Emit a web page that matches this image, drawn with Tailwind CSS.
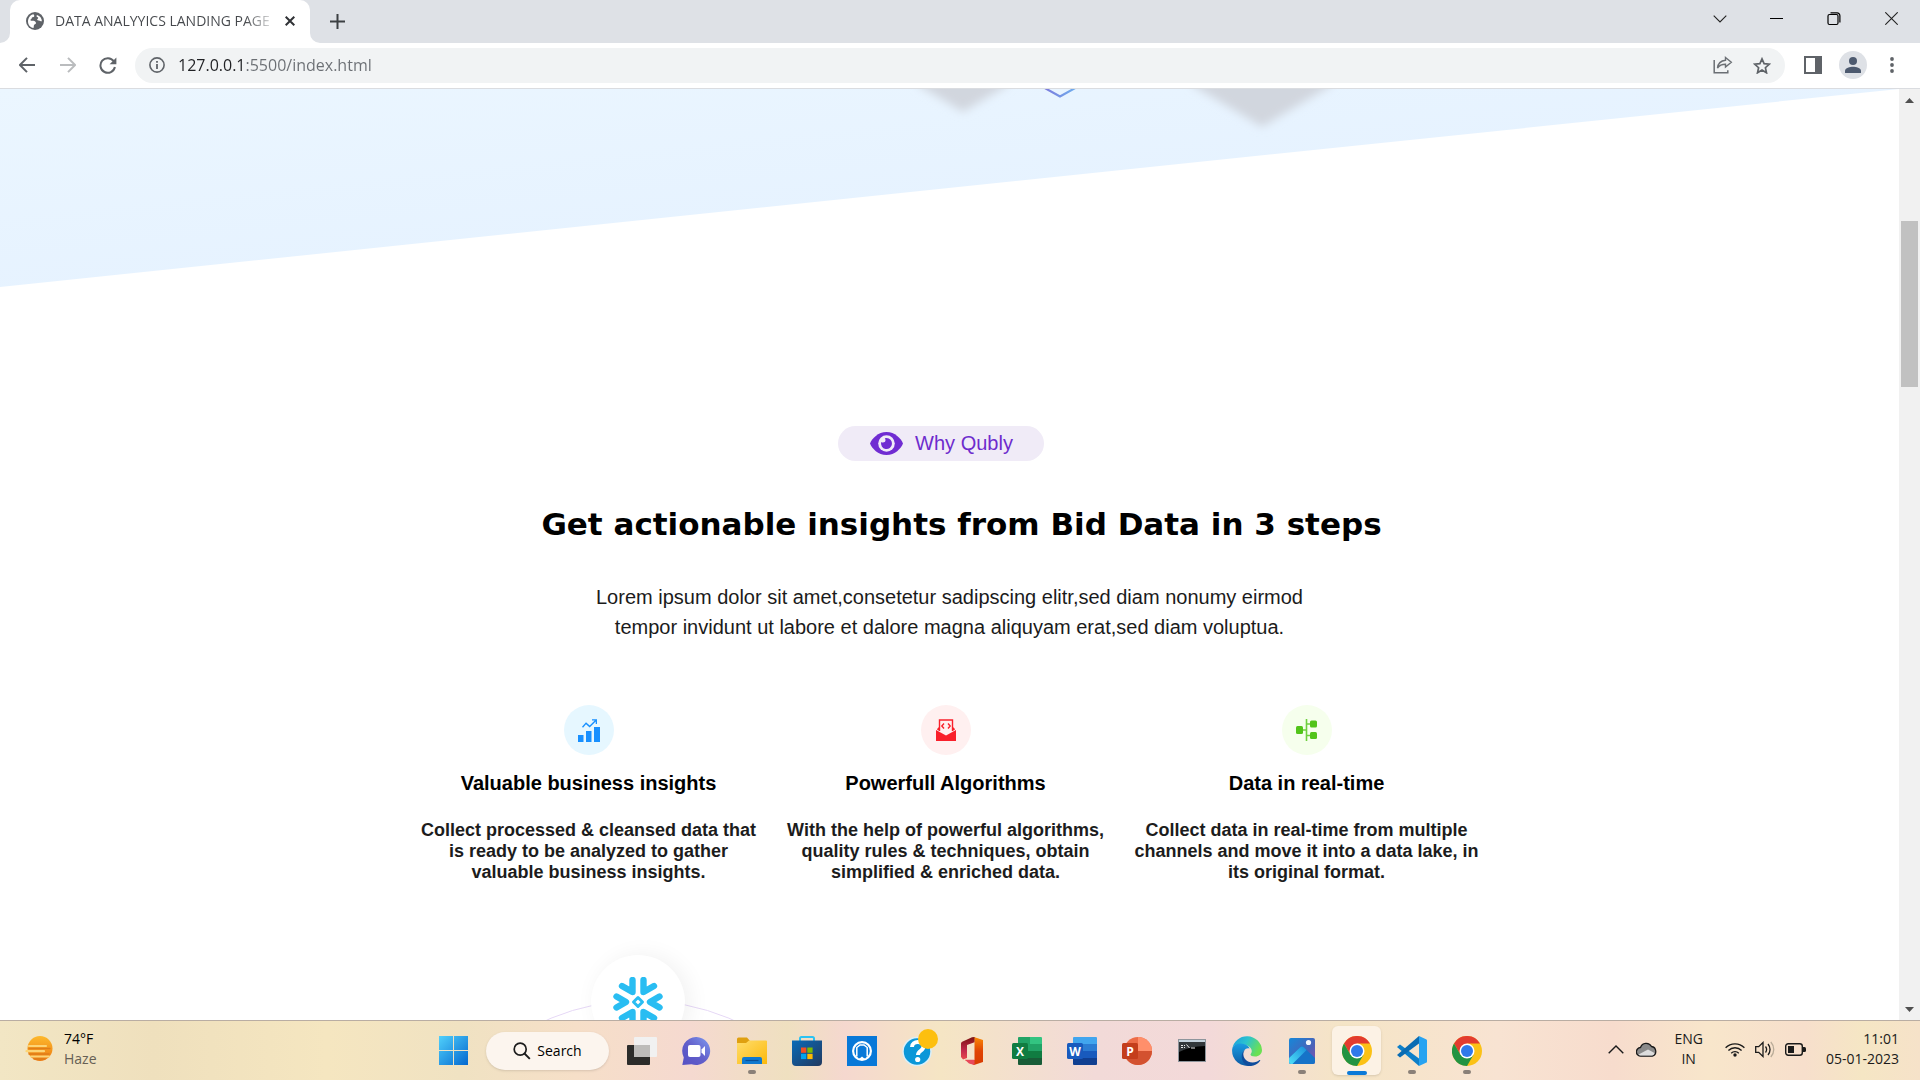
<!DOCTYPE html>
<html lang="en">
<head>
<meta charset="utf-8">
<title>DATA ANALYYICS LANDING PAGE</title>
<script src="https://cdn.jsdelivr.net/npm/@tailwindcss/browser@4"></script>
</head>
<body class="flex h-screen flex-col overflow-hidden bg-white font-['Open_Sans','Noto_Sans',sans-serif] text-[#202124]">

<svg class="absolute size-0" aria-hidden="true">
  <defs>
    <linearGradient id="win" x1="0" y1="0" x2="1" y2="1"><stop offset="0" stop-color="#50d0fb"/><stop offset="1" stop-color="#0468cf"/></linearGradient>
    <linearGradient id="chat" x1="1" y1="0" x2="0" y2="1"><stop offset="0" stop-color="#7e9bf0"/><stop offset=".5" stop-color="#6360cb"/><stop offset="1" stop-color="#5550c4"/></linearGradient>
    <linearGradient id="folder" x1="0" y1="0" x2="1" y2="1"><stop offset="0" stop-color="#ffdd6c"/><stop offset="1" stop-color="#fcb90b"/></linearGradient>
    <linearGradient id="store" x1="0" y1="0" x2="1" y2="1"><stop offset="0" stop-color="#0a6bb8"/><stop offset="1" stop-color="#22395f"/></linearGradient>
    <linearGradient id="officeL" x1="0" y1="0" x2="0" y2="1"><stop offset="0" stop-color="#7c1313"/><stop offset=".6" stop-color="#c32a4c"/><stop offset="1" stop-color="#e8484c"/></linearGradient>
    <linearGradient id="officeR" x1="0" y1="0" x2="0" y2="1"><stop offset="0" stop-color="#fb8b05"/><stop offset=".5" stop-color="#e04403"/><stop offset="1" stop-color="#d83b01"/></linearGradient>
    <linearGradient id="edgeTop" x1="0" y1="0" x2="1" y2=".4"><stop offset="0" stop-color="#1a9be0"/><stop offset=".5" stop-color="#2cc3cf"/><stop offset="1" stop-color="#6be053"/></linearGradient>
    <linearGradient id="edgeLow" x1="0" y1="0" x2="0" y2="1"><stop offset="0" stop-color="#1b9de2"/><stop offset="1" stop-color="#0c59a4"/></linearGradient>
    <linearGradient id="photo" x1="0" y1="0" x2="1" y2="1"><stop offset="0" stop-color="#1688d9"/><stop offset=".6" stop-color="#4a62b8"/><stop offset="1" stop-color="#8a4fae"/></linearGradient>
    <linearGradient id="hill" x1="1" y1="0" x2="0" y2="1"><stop offset="0" stop-color="#1a8fdb"/><stop offset="1" stop-color="#4fe0f8"/></linearGradient>
    <linearGradient id="sun" x1="0" y1="0" x2="0" y2="1"><stop offset="0" stop-color="#fdb92c"/><stop offset="1" stop-color="#ec7a12"/></linearGradient>
    <linearGradient id="chev" x1="0" y1="0" x2="1" y2="0"><stop offset="0" stop-color="#7d78dc"/><stop offset="1" stop-color="#6fb0ee"/></linearGradient>
    <filter id="soft" x="-50%" y="-50%" width="200%" height="200%"><feGaussianBlur stdDeviation="5"/></filter>
    <symbol id="chrome" viewBox="0 0 30 30">
      <circle cx="15" cy="15" r="15" fill="#fbc116"/>
      <path d="M15 15 8.500 18.750 2 7.500A15 15 0 0 1 28 7.500H15z" fill="#e33b2e"/>
      <path d="M2 7.500A15 15 0 0 0 15 30L21.500 18.750 15 15 8.500 18.750z" fill="#229342"/>
      <circle cx="15" cy="15" r="7.500" fill="#fff"/><circle cx="15" cy="15" r="6" fill="#2f79ea"/>
    </symbol>
  </defs>
</svg>

<!-- Browser window: tab strip -->
<header class="shrink-0">
  <div class="flex h-[43px] items-stretch bg-[#dee1e6]">
    <svg class="w-[10px] self-end" height="10" viewBox="0 0 10 10"><path d="M10 0v10H0A10 10 0 0 0 10 0z" fill="#fff"/></svg>
    <div class="flex w-[300px] items-center rounded-t-[10px] bg-white pr-2 pb-[2px] pl-4">
      <svg class="size-[18px] shrink-0" viewBox="0 0 18 18"><circle cx="9" cy="9" r="9" fill="#5f6368"/><path d="M7.500 2.300C9 4 8.500 5 6.500 5.300c-1 .2-.5 1.700-1.800 2.200-.8.300-.2 1.300 1.300 1.300 2.500 0 3.800.5 4 2.200.1 1-1 1.200-1.700 1.700-.7.6-.3 1.700-.8 3.300C4 15.500 2 12.500 2 9.500c0-3.600 2.300-6.700 5.500-7.200z" fill="#fff"/><path d="M11 3c-1 1-.3 2 .8 2.300.8.300.2 1.500-.5 2-.6.500.3 1.400 1.400 1.200 1.200-.2 1.700 1 3.200.8C15.900 6.300 14 3.800 11 3z" fill="#fff"/></svg>
      <h1 class="ml-[11px] w-[221px] overflow-hidden bg-[linear-gradient(to_right,#45484c_190px,transparent_222px)] bg-clip-text text-[14px] leading-5 whitespace-nowrap text-transparent">DATA ANALYYICS LANDING PAGE</h1>
      <button class="ml-1 grid size-5 shrink-0 place-items-center" aria-label="Close tab"><svg class="size-[10px]" viewBox="0 0 10 10"><path d="M.7.700l8.600 8.600M9.300.700.7 9.300" stroke="#303236" stroke-width="2"/></svg></button>
    </div>
    <svg class="w-[10px] self-end" height="10" viewBox="0 0 10 10"><path d="M0 0v10h10A10 10 0 0 1 0 0z" fill="#fff"/></svg>
    <button class="grid w-[35px] place-items-center" aria-label="New tab"><svg class="size-[15px]" viewBox="0 0 15 15"><path d="M7.500 0v15M0 7.500h15" stroke="#3c4043" stroke-width="2"/></svg></button>
    <div class="ml-auto flex h-[37px]">
      <button class="grid w-[57px] place-items-center" aria-label="Search tabs"><svg width="14" height="8" viewBox="0 0 14 8"><path d="M.7.700 7 7 13.300.700" fill="none" stroke="#222" stroke-width="1.100"/></svg></button>
      <button class="grid w-[57px] place-items-center" aria-label="Minimize"><svg width="13" height="3" viewBox="0 0 13 3"><path d="M0 1.500h13" stroke="#000"/></svg></button>
      <button class="grid w-[57px] place-items-center" aria-label="Restore"><svg width="14" height="14" viewBox="0 0 14 14"><rect x="1" y="2.500" width="10" height="10" rx="1.500" fill="none" stroke="#000" stroke-width="1.200"/><path d="M3.500.900h6.500a2.800 2.800 0 0 1 2.900 2.900v6.700" fill="none" stroke="#000" stroke-width="1.200"/></svg></button>
      <button class="grid w-[58px] place-items-center" aria-label="Close"><svg width="13" height="13" viewBox="0 0 13 13"><path d="M.300.300l12.400 12.400M12.700.300.300 12.700" stroke="#222" stroke-width="1.100"/></svg></button>
    </div>
  </div>

  <!-- Toolbar -->
  <div class="flex h-[46px] items-center border-b border-[#dadce0] pb-px">
    <div class="flex pl-[6px]">
      <button class="grid h-9 w-[41px] place-items-center" aria-label="Back"><svg width="16" height="16" viewBox="0 0 16 16"><path d="M16 8H1.500M8 .9.900 8l7.100 7.100" fill="none" stroke="#5f6368" stroke-width="2"/></svg></button>
      <button class="grid h-9 w-[41px] place-items-center" aria-label="Forward"><svg width="16" height="16" viewBox="0 0 16 16"><path d="M0 8h14.500M8 .9 15.100 8 8 15.100" fill="none" stroke="#babcbe" stroke-width="2"/></svg></button>
      <button class="grid h-9 w-[39px] place-items-center" aria-label="Reload"><svg width="18" height="17" viewBox="0 0 18 17"><path d="M14.700 4.200A7.300 7.300 0 1 0 15.900 10" fill="none" stroke="#5f6368" stroke-width="2"/><path d="M17.400.4v6.800h-6.800z" fill="#5f6368"/></svg></button>
    </div>
    <div class="ml-2 flex h-[35px] flex-1 items-center rounded-full bg-[#f1f3f4] pr-[13px] pl-[14px]">
      <svg class="size-4 shrink-0" viewBox="0 0 16 16"><circle cx="8" cy="8" r="7.100" fill="none" stroke="#5f6368" stroke-width="1.600"/><path d="M8 7v5M8 4v1.800" stroke="#5f6368" stroke-width="1.800"/></svg>
      <input aria-label="Address" value="127.0.0.1:5500/index.html" class="ml-[13px] h-8 min-w-0 flex-1 bg-[linear-gradient(to_right,#202124_67px,#6b6f74_67px)] bg-clip-text text-base text-transparent outline-none">
      <button class="grid w-8 place-items-center" aria-label="Share"><svg width="20" height="18" viewBox="0 0 20 18"><path d="M1.200 4v12.800h13.600v-2.500" fill="none" stroke="#6b6f74" stroke-width="1.500"/><path d="M12.500 1.500 18.300 6.300 12.500 11V8.200C8.500 8.200 6.200 9.500 4.500 12 5 7.500 8 4.800 12.500 4.300z" fill="none" stroke="#6b6f74" stroke-width="1.400"/></svg></button>
      <button class="ml-[13px] grid w-5 place-items-center" aria-label="Bookmark"><svg width="18" height="17" viewBox="0 0 18 17"><path d="m9 1.900 2.100 4.800 5.200.5-3.900 3.500 1.100 5.100L9 13.100l-4.500 2.700 1.100-5.100L1.700 7.200l5.200-.5z" fill="none" stroke="#5f6368" stroke-width="1.700"/></svg></button>
    </div>
    <div class="flex items-center pr-5">
      <button class="ml-[19px]" aria-label="Side panel"><svg width="18" height="18" viewBox="0 0 18 18"><rect x="1" y="1" width="16" height="16" fill="#fff" stroke="#5f6368" stroke-width="2"/><path d="M11 1h6v16h-6z" fill="#5f6368"/></svg></button>
      <button class="ml-[17px] grid size-7 place-items-center rounded-full bg-[#dee1e6]" aria-label="Profile"><svg width="16" height="16" viewBox="0 0 16 16"><circle cx="8" cy="4" r="4" fill="#4d5a6f"/><path d="M0 16v-2.300C0 11 5 9.700 8 9.700s8 1.300 8 4V16z" fill="#4d5a6f"/></svg></button>
      <button class="ml-[17px] grid w-4 place-items-center" aria-label="Menu"><svg width="4" height="16" viewBox="0 0 4 16"><g fill="#5f6368"><circle cx="2" cy="2" r="1.900"/><circle cx="2" cy="8" r="1.900"/><circle cx="2" cy="14" r="1.900"/></g></svg></button>
    </div>
  </div>
</header>

<!-- Page viewport -->
<div class="flex min-h-0 flex-1">
  <main class="flex min-w-0 flex-1 flex-col overflow-hidden font-['Liberation_Sans',Arial,sans-serif]">
    <section class="relative h-[198px] shrink-0 bg-[linear-gradient(174deg,#ebf6ff,#e4f1ff_75%)] [clip-path:polygon(0_0,100%_0,0_100%)]">
      <svg class="absolute top-0 left-1/2 -translate-x-1/2" width="800" height="60" viewBox="550 0 800 60">
        <g filter="url(#soft)" fill="#d1d6de">
          <path d="M963 23 918 -4V-40H1008V-4z"/>
          <path d="M1262 38 1192 -4V-40H1332V-4z"/>
        </g>
        <path d="m1043-2 17 9.500L1077-2" fill="none" stroke="url(#chev)" stroke-width="2.200"/>
      </svg>
    </section>

    <section class="flex shrink-0 flex-col items-center pt-[139px]">
      <div class="pr-[17px]">
        <div class="flex h-[35px] items-center gap-3 rounded-full bg-[#f0ebf7] pr-[31px] pl-8 text-xl text-[#6e2bcd]">
          <svg width="33" height="23" viewBox="0 0 33 23"><path d="M16.500 0C25 0 31 6.500 33 11.500 31 16.500 25 23 16.500 23S2 16.500 0 11.500C2 6.500 8 0 16.500 0z" fill="#702cd2"/><circle cx="16.500" cy="11.500" r="8.300" fill="#f0ebf7"/><path d="M16.500 6a5.500 5.500 0 1 1-5.300 4c1.800 1.300 4.300.3 4.300-1.700 0-.8-.2-1.500-.7-2A5.500 5.500 0 0 1 16.500 6z" fill="#702cd2"/></svg>
          <a href="#why" class="pb-0.5">Why Qubly</a>
        </div>
      </div>
      <h2 id="why" class="mt-[41px] pl-6 text-center font-['Arial_Black','DejaVu_Sans',sans-serif] text-[31px] leading-[44px] font-bold text-black">Get actionable insights from Bid Data in 3 steps</h2>
      <p class="mt-9 text-center text-xl leading-[30px] text-[#1b1b1b]">Lorem ipsum dolor sit amet,consetetur sadipscing elitr,sed diam nonumy eirmod<br>tempor invidunt ut labore et dalore magna aliquyam erat,sed diam voluptua.</p>

      <div class="mt-[63px] flex justify-center gap-[23px] text-center font-bold">
        <article class="flex w-[344px] flex-col items-center">
          <div class="grid size-[50px] place-items-center rounded-full bg-[#e6f7ff]"><svg width="22" height="23" viewBox="0 0 22 23"><g fill="#1890ff"><path d="M0 16h5.500v7H0zM8 12h5.500v11H8zM16 8h6v15h-6z"/><path d="M14 .3h5V5h-1.300V2.600l-6 6L8 5.300 5 8.700l-1-1 4-4.500 3.700 3.300 5-4.900H14z"/></g></svg></div>
          <h3 class="mt-4 text-xl leading-6 text-black">Valuable business insights</h3>
          <p class="mt-[25px] text-lg leading-[21px] text-[#1c1c1c]">Collect processed &amp; cleansed data that<br>is ready to be analyzed to gather<br>valuable business insights.</p>
        </article>
        <article class="flex w-[324px] flex-col items-center">
          <div class="grid size-[50px] place-items-center rounded-full bg-[#fff0f0]"><svg width="20" height="22" viewBox="0 0 20 22"><path d="M0 11l10 5.500L20 11v11H0z" fill="#f9202b"/><path d="M3.500 12V1h13v11" fill="none" stroke="#f9202b" stroke-width="1.400"/><path d="M1 10l2.500-2.500V12L1 10.500zM19 10l-2.500-2.500V12l2.500-1.500z" fill="#f9202b"/><path d="M8 4.500 5.800 7 8 9.500M12 4.500 14.200 7 12 9.500" fill="none" stroke="#f9202b" stroke-width="1.400"/></svg></div>
          <h3 class="mt-4 text-xl leading-6 text-black">Powerfull Algorithms</h3>
          <p class="mt-[25px] text-lg leading-[21px] text-[#1c1c1c]">With the help of powerful algorithms,<br>quality rules &amp; techniques, obtain<br>simplified &amp; enriched data.</p>
        </article>
        <article class="flex w-[352px] flex-col items-center">
          <div class="grid size-[50px] place-items-center rounded-full bg-[#f6ffed]"><svg width="21" height="22" viewBox="0 0 21 22"><g fill="#52c41a"><rect y="7" width="7" height="8" rx="1.500"/><rect x="14" y="1.500" width="7" height="7" rx="1.500"/><rect x="14" y="13" width="7" height="7" rx="1.500"/></g><path d="M10.500 0v22M7 11h3.500M10.500 5H14M10.500 16.500H14" stroke="#6fd03f" stroke-width="1.600"/></svg></div>
          <h3 class="mt-4 text-xl leading-6 text-black">Data in real-time</h3>
          <p class="mt-[25px] text-lg leading-[21px] whitespace-nowrap text-[#1c1c1c]">Collect data in real-time from multiple<br>channels and move it into a data lake, in<br>its original format.</p>
        </article>
      </div>

      <!-- Integrations ring, cut off by the fold -->
      <div class="relative mt-[117px] h-[466px] w-[1058px]">
        <div class="absolute top-0 left-[-14px] size-[466px] rounded-full border border-[#e6d8f6]"></div>
        <div class="absolute -top-[45px] left-[170px] grid size-[94px] place-items-center rounded-full bg-white shadow-[5px_0_22px_rgba(0,0,0,0.06)]">
          <svg width="50" height="50" viewBox="-25 -25 50 50"><g fill="none" stroke="#29bdf2" stroke-width="6.400" stroke-linecap="round" stroke-linejoin="round"><path d="M0-4.500 4.500 0 0 4.500-4.500 0z" stroke-width="3"/><path d="M-21.500-5.500-12 0-21.500 5.500M21.500-5.500 12 0 21.500 5.500"/><path d="M-5.500-22V-10L-16-16M5.500-22V-10L16-16M-5.500 22V10L-16 16M5.500 22V10L16 16"/></g></svg>
        </div>
      </div>
    </section>
  </main>

  <!-- Scrollbar -->
  <div class="flex w-[21px] shrink-0 flex-col items-center bg-[#f1f1f1]">
    <button class="grid h-[22px] w-full place-items-center" aria-label="Scroll up"><svg width="9" height="5" viewBox="0 0 9 5"><path d="M4.500 0 9 5H0z" fill="#505050"/></svg></button>
    <div class="mt-[110px] h-[166px] w-[17px] bg-[#c1c1c1]"></div>
    <button class="mt-auto grid h-[22px] w-full place-items-center" aria-label="Scroll down"><svg width="9" height="5" viewBox="0 0 9 5"><path d="M4.500 5 0 0h9z" fill="#505050"/></svg></button>
  </div>
</div>

<!-- Taskbar -->
<footer class="grid h-[60px] shrink-0 grid-cols-[1fr_auto_1fr] items-stretch border-t border-[#b9ada3] bg-[linear-gradient(to_right,#f2e6c4,#efe0bd_8%,#f5e6c0_17%,#f0e2c2_24%,#f6dfc8_30%,#f5d9d0_36%,#efe0c0_41%,#f5d8cf_44%,#f5e5c4_49%,#f2dad8_57%,#f3d9d9_63%,#f5e5c6_70%,#f8e3d2_78%,#f7dccd_84%,#f8e6cb_89%,#f7dfcc_94%,#f5e6c4_97%,#f6e2c9)]">
  <button class="flex items-center gap-[11px] justify-self-start pb-[3px] pl-[25px] text-left">
    <svg width="28" height="28" viewBox="0 0 28 28"><circle cx="15" cy="13.500" r="12.500" fill="url(#sun)"/><g stroke="#fcd476" stroke-width="2.200" stroke-linecap="round"><path d="M4 11h17M1.500 16.200H19M6 21.500h18"/></g><g stroke="#e07d18" stroke-width="1.400" stroke-linecap="round"><path d="M4 13.500h21M4 19h20M9 24h11"/></g></svg>
    <span class="block text-sm leading-5"><span class="block text-black">74°F</span><span class="block text-[#666055]">Haze</span></span>
  </button>

  <nav class="flex items-center" aria-label="Apps">
    <button class="grid h-full w-[55px] place-items-center" aria-label="Start"><svg width="29" height="29" viewBox="0 0 29 29"><path d="M0 0h14v14H0zM15 0h14v14H15zM0 15h14v14H0zM15 15h14v14H15z" fill="url(#win)"/></svg></button>
    <button class="mx-[5px] flex h-[38px] w-[123px] items-center justify-center gap-[6px] rounded-full bg-[#fcf5ee] text-[14px] text-black shadow-sm"><svg width="18" height="18" viewBox="0 0 18 18"><circle cx="7.200" cy="7.200" r="6" fill="none" stroke="#1c1c1c" stroke-width="1.700"/><path d="m11.500 11.500 5.300 5.300" stroke="#1c1c1c" stroke-width="1.900"/></svg>Search</button>
    <button class="grid h-full w-[55px] place-items-center" aria-label="Task view"><svg width="30" height="28" viewBox="0 0 30 28"><rect y="8" width="23" height="20" rx="1" fill="#2c2c2a"/><rect x="7" y="0" width="23" height="20" rx="1" fill="#f1f1f1"/><path d="M7 8h16v12H8a1 1 0 0 1-1-1z" fill="#bdbcba"/></svg></button>
    <button class="grid h-full w-[55px] place-items-center" aria-label="Chat"><svg width="29" height="28" viewBox="0 0 29 28"><path d="M14.500 0a14 14 0 1 1-5 27.200L.3 28l1.500-7.500A14 14 0 0 1 14.500 0z" fill="url(#chat)"/><rect x="6" y="8" width="12.500" height="12" rx="2" fill="#fff"/><path d="M19.500 12.500 23 9v10l-3.500-3.500z" fill="#fff"/></svg></button>
    <button class="relative grid h-full w-[55px] place-items-center" aria-label="File Explorer"><svg width="30" height="28" viewBox="0 0 30 28"><path d="M0 2a1.500 1.500 0 0 1 1.500-1.500H10L13 4h15.500A1.500 1.500 0 0 1 30 5.500V12H0z" fill="#dfa010"/><path d="M0 6h9l3-2.500h17A1 1 0 0 1 30 4.500V27H0z" fill="url(#folder)"/><path d="M5 27v-5a2 2 0 0 1 2-2h16a2 2 0 0 1 2 2v5z" fill="#1079cf"/><path d="M8.500 23.500h13" stroke="#0a4f96" stroke-width="1.200"/></svg><span class="absolute bottom-[6px] h-1 w-2 rounded-full bg-[#8a8078]"></span></button>
    <button class="grid h-full w-[55px] place-items-center" aria-label="Microsoft Store"><svg width="30" height="30" viewBox="0 0 30 30"><path d="M8 6V2.500A1.500 1.500 0 0 1 9.500 1h11A1.500 1.500 0 0 1 22 2.500V6" fill="none" stroke="#2bc3f3" stroke-width="2"/><path d="M0 4.500h30V26a4 4 0 0 1-4 4H4a4 4 0 0 1-4-4z" fill="url(#store)"/><path d="M9 11.500h5.300v5.300H9z" fill="#f25022"/><path d="M15.300 11.500h5.300v5.300h-5.300z" fill="#7fba00"/><path d="M9 17.800h5.300v5.300H9z" fill="#00a4ef"/><path d="M15.300 17.800h5.300v5.300h-5.300z" fill="#ffb900"/></svg></button>
    <button class="grid h-full w-[55px] place-items-center" aria-label="Support"><svg width="30" height="30" viewBox="0 0 30 30"><path d="M0 0h30v30H0z" fill="#0878d8"/><circle cx="15" cy="15" r="8.900" fill="none" stroke="#fff" stroke-width="2.200"/><path d="M9.800 20.500v-9L13 9h4l3.200 2.500v9" fill="none" stroke="#fff" stroke-width="1.500"/><path d="M11.500 22.500V12l2-1.500h3l2 1.500v10.500L15 20z" fill="#0878d8"/><path d="M11.500 23.500 15 20.500l3.500 3z" fill="#fff"/></svg></button>
    <button class="relative grid h-full w-[55px] place-items-center" aria-label="Get Help"><svg width="30" height="30" viewBox="0 0 30 30"><circle cx="15" cy="15.500" r="14" fill="#0b97d8" stroke="#dbeff8" stroke-width="1.500"/><path d="M10 11c0-6.500 11.500-6.500 11.500-.5 0 4.500-5.500 4-5.500 8.500" fill="none" stroke="#fff" stroke-width="4"/><circle cx="15.700" cy="23.500" r="2.600" fill="#fff"/></svg><span class="absolute top-2 right-[6px] size-5 rounded-full bg-[#fdbf0f]"></span></button>
    <button class="grid h-full w-[55px] place-items-center" aria-label="Office"><svg width="22" height="28" viewBox="0 0 22 28"><path d="M13 0 22 3v22l-9 3-9-5h9.500V5z" fill="url(#officeR)"/><path d="M13.500 0v5.200L6 8v13L2 22.500 0 20V6.500a2 2 0 0 1 1.200-1.800L11 .3z" fill="url(#officeL)"/><path d="M4 22.800h9.500V28L8 26.500z" fill="#e8485a"/></svg></button>
    <button class="grid h-full w-[55px] place-items-center" aria-label="Excel"><svg width="30" height="28" viewBox="0 0 30 28"><path d="M6 1a1 1 0 0 1 1-1h11v14H6z" fill="#21a366"/><path d="M18 0h11a1 1 0 0 1 1 1v6H18z" fill="#33c481"/><path d="M18 7h12v7H18z" fill="#21a366"/><path d="M6 14h12v7H6z" fill="#107c41"/><path d="M18 14h12v7H18z" fill="#107c41"/><path d="M6 21h24v6a1 1 0 0 1-1 1H7a1 1 0 0 1-1-1z" fill="#185c37"/><rect x="0" y="6" width="16" height="16" rx="1.500" fill="#107c41"/><text x="8" y="18.500" text-anchor="middle" font-family="Open Sans" font-weight="700" font-size="12" fill="#fff">X</text></svg></button>
    <button class="grid h-full w-[55px] place-items-center" aria-label="Word"><svg width="30" height="28" viewBox="0 0 30 28"><path d="M6 1a1 1 0 0 1 1-1h22a1 1 0 0 1 1 1v6H6z" fill="#41a5ee"/><path d="M6 7h24v7H6z" fill="#2b7cd3"/><path d="M6 14h24v7H6z" fill="#185abd"/><path d="M6 21h24v6a1 1 0 0 1-1 1H7a1 1 0 0 1-1-1z" fill="#103f91"/><rect x="0" y="6" width="16" height="16" rx="1.500" fill="#185abd"/><text x="8" y="18.500" text-anchor="middle" font-family="Open Sans" font-weight="700" font-size="12" fill="#fff">W</text></svg></button>
    <button class="grid h-full w-[55px] place-items-center" aria-label="PowerPoint"><svg width="30" height="28" viewBox="0 0 30 28"><circle cx="16" cy="14" r="14" fill="#ed6c47"/><path d="M16 0a14 14 0 0 1 14 14H16z" fill="#ff8f6b"/><path d="M2 14h28a14 14 0 0 1-28 0z" fill="#d35230"/><rect x="0" y="6" width="16" height="16" rx="1.500" fill="#c43e1c"/><text x="8" y="18.500" text-anchor="middle" font-family="Open Sans" font-weight="700" font-size="12" fill="#fff">P</text></svg></button>
    <button class="grid h-full w-[55px] place-items-center" aria-label="Command Prompt"><svg width="28" height="23" viewBox="0 0 28 23"><rect x=".5" y=".5" width="27" height="22" fill="#000" stroke="#8e959c"/><path d="M1 1h26v2H1z" fill="#c5d3dd"/><path d="M1 3h26v4Q12 7 1 13z" fill="#33383b"/><path d="M3 6.500h2M3 8.500h2M6.500 6v1M6.500 8v1M8.500 5.500l3 3.500M13 9h4" stroke="#e8e8e8"/></svg></button>
    <button class="grid h-full w-[55px] place-items-center" aria-label="Edge"><svg width="30" height="30" viewBox="0 0 30 30"><path d="M.2 13A15 15 0 0 1 30 14c0 4-3 6.500-7 6.500-3 0-4.500-1-4.500-2 0-.8 1.300-1.400 1.300-3.500C19.800 10.500 13 8 8 8 4 8 1 10.500.2 13z" fill="url(#edgeTop)"/><path d="M.2 13C1 9.500 4.500 7.500 8.500 7.500c5 0 9 3 9 5-4-1.500-7.500 3-6.500 8 1 4.500 4.500 8 9 8.500A15 15 0 0 1 .2 13z" fill="url(#edgeLow)"/><path d="M13 14c-3 3-2 9 3 11.500 5 2 9 .5 11.500-1.500.5-.3 1 .2.700.700C25 29 20 30.500 16 30c-6-2-9-12-3-16z" fill="#0f4c9c"/></svg></button>
    <button class="relative grid h-full w-[55px] place-items-center" aria-label="Photos"><svg width="26" height="26" viewBox="0 0 26 26"><rect width="26" height="26" rx="2" fill="url(#photo)"/><path d="M0 20 11 9.500a3 3 0 0 1 4 0L26 20v4a2 2 0 0 1-2 2H2a2 2 0 0 1-2-2z" fill="#1673c8"/><path d="M0 20 11 9.500a3 3 0 0 1 4 0L17.500 12 3.500 26H2a2 2 0 0 1-2-2z" fill="url(#hill)"/><circle cx="19.500" cy="4.500" r="2.600" fill="#f2f6fb"/></svg><span class="absolute bottom-[6px] h-1 w-2 rounded-full bg-[#8a8078]"></span></button>
    <button class="relative mx-[3px] grid h-[49px] w-[49px] place-items-center rounded-md bg-[#fcf2e5] shadow-sm" aria-label="Chrome"><svg width="30" height="30"><use href="#chrome"/></svg><span class="absolute bottom-0 h-1 w-5 rounded-full bg-[#0b7ad8]"></span></button>
    <button class="relative grid h-full w-[55px] place-items-center" aria-label="Visual Studio Code"><svg width="30" height="30" viewBox="0 0 30 30"><path d="M0 11 3 8.500 22 22.500V30z" fill="#0d7fc9"/><path d="M0 19 3 21.500 22 7.500V0z" fill="#0a6cb3"/><path d="M22 0l7 3.200a1.500 1.500 0 0 1 1 1.400v20.800a1.500 1.500 0 0 1-1 1.400L22 30z" fill="#27a3f1"/></svg><span class="absolute bottom-[6px] h-1 w-2 rounded-full bg-[#8a8078]"></span></button>
    <button class="relative grid h-full w-[55px] place-items-center" aria-label="Chrome, second window"><svg width="30" height="30"><use href="#chrome"/></svg><span class="absolute bottom-[6px] h-1 w-2 rounded-full bg-[#8a8078]"></span></button>
  </nav>

  <div class="flex items-center justify-self-end pr-[21px] pb-[3px] text-sm leading-5 text-[#1a1a1a]">
    <button aria-label="Show hidden icons"><svg width="16" height="9" viewBox="0 0 16 9"><path d="M.7 8.300 8 1l7.300 7.300" fill="none" stroke="#1a1a1a" stroke-width="1.400"/></svg></button>
    <button class="ml-3" aria-label="OneDrive"><svg width="21" height="15" viewBox="0 0 21 15"><path d="M5 14.200A4.300 4.300 0 0 1 4.500 5.500 6 6 0 0 1 15.500 4.500a5 5 0 0 1 .8 9.700z" fill="#8a8a8a" stroke="#1a1a1a" stroke-width="1.300"/><path d="M2.500 12.500 12 7.500l6.500 3.500c-.3 1.500-1 2.500-2.500 2.500H5c-1.200 0-2-.4-2.500-1z" fill="#ddd"/></svg></button>
    <button class="ml-[17px] text-center">ENG<br>IN</button>
    <button class="ml-[22px] flex items-center" aria-label="Network, volume, battery">
      <svg width="20" height="15" viewBox="0 0 20 15"><g fill="none" stroke="#1a1a1a" stroke-width="1.300"><path d="M.6 5.800a13 13 0 0 1 18.800 0M3.400 8.500a9.300 9.300 0 0 1 13.200 0M6.200 11.200a5.400 5.400 0 0 1 7.600 0"/></g><circle cx="10" cy="13" r="1.700" fill="#1a1a1a"/></svg>
      <svg class="ml-[10px]" width="20" height="17" viewBox="0 0 20 17"><path d="M.7 5.700h3L8 1.500v14l-4.300-4.200h-3z" fill="none" stroke="#1a1a1a" stroke-width="1.300"/><path d="M10.500 5.500a5 5 0 0 1 0 6M13 3a8.500 8.500 0 0 1 0 11" fill="none" stroke="#1a1a1a" stroke-width="1.300"/><path d="M15.800 1a11 11 0 0 1 0 15" fill="none" stroke="#b9ab98" stroke-width="1.300"/></svg>
      <svg class="ml-[10px]" width="21" height="13" viewBox="0 0 21 13"><rect x=".7" y=".7" width="16.600" height="11.600" rx="2.500" fill="none" stroke="#1a1a1a" stroke-width="1.400"/><rect x="3" y="3" width="6" height="7" fill="#1a1a1a"/><path d="M18 4h1.500A1.500 1.500 0 0 1 21 5.500v2A1.500 1.500 0 0 1 19.500 9H18z" fill="#1a1a1a"/></svg>
    </button>
    <button class="ml-5 text-right">11:01<br>05-01-2023</button>
  </div>
</footer>
</body>
</html>
